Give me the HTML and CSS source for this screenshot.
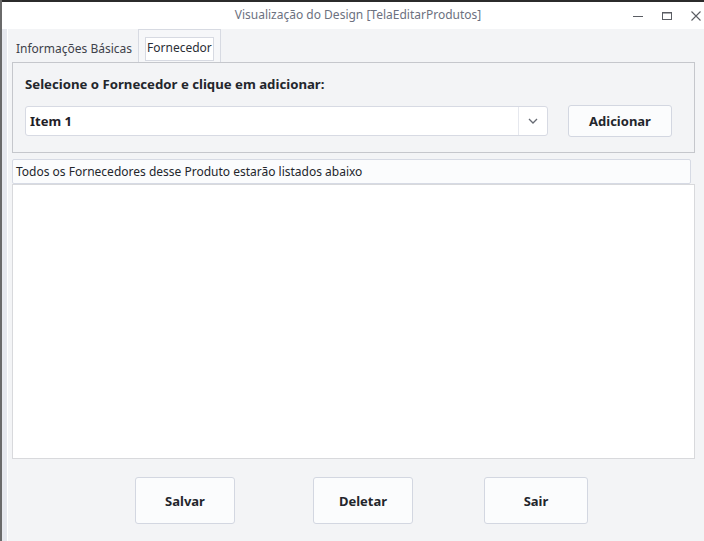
FILE: index.html
```html
<!DOCTYPE html>
<html>
<head>
<meta charset="utf-8">
<link rel="stylesheet" href="styles.css">
</head>
<body>
<div class="desk">
  <div class="window">
    <div class="titlebar">
      <span class="title">Visualização do Design [TelaEditarProdutos]</span>
      <div class="controls">
        <svg class="ctl" width="12" height="12" viewBox="0 0 12 12"><path d="M1 6.5h10" stroke="#5a5d63" stroke-width="1"/></svg>
        <svg class="ctl" width="12" height="12" viewBox="0 0 12 12"><rect x="1.5" y="2.5" width="9" height="7" fill="none" stroke="#5a5d63" stroke-width="1"/><path d="M1.5 3h9" stroke="#5a5d63" stroke-width="1"/></svg>
        <svg class="ctl" width="12" height="12" viewBox="0 0 12 12"><path d="M1.5 1.5l9 9M10.5 1.5l-9 9" stroke="#5a5d63" stroke-width="1.1"/></svg>
      </div>
    </div>
    <div class="body">
      <div class="tabs">
        <div class="tab">Informações Básicas</div>
        <div class="tab active"><span class="focus">Fornecedor</span></div>
      </div>
      <div class="panel">
        <div class="panel-title">Selecione o Fornecedor e clique em adicionar:</div>
        <div class="row">
          <div class="combo">
            <span class="combo-text">Item 1</span>
            <span class="combo-arrow">
              <svg width="12" height="8" viewBox="0 0 12 8"><path d="M2 2l4 4 4-4" fill="none" stroke="#666a73" stroke-width="1.3"/></svg>
            </span>
          </div>
          <button class="btn add">Adicionar</button>
        </div>
      </div>
      <div class="info">Todos os Fornecedores desse Produto estarão listados abaixo</div>
      <div class="list"></div>
      <div class="actions">
        <button class="btn big salvar">Salvar</button>
        <button class="btn big deletar">Deletar</button>
        <button class="btn big sair">Sair</button>
      </div>
    </div>
  </div>
</div>
</body>
</html>
```
FILE: styles.css
```css
html, body {
  margin: 0;
  padding: 0;
}
body {
  width: 704px;
  height: 541px;
  overflow: hidden;
  background: #2b2b2b;
  font-family: "Noto Sans", "Open Sans", sans-serif;
}
.desk {
  padding: 2px 0 0 2px;
  height: 539px;
  background: linear-gradient(to right, #6a6a6a 0, #6a6a6a 2px, transparent 2px);
}
.window {
  height: 539px;
  display: flex;
  flex-direction: column;
  background: #f3f4f6;
}
.titlebar {
  height: 27px;
  background: #ffffff;
  position: relative;
  display: flex;
  align-items: center;
  justify-content: center;
}
.title {
  font-size: 12px;
  color: #6c7180;
  margin-left: 10px;
  margin-bottom: 2px;
}
.controls {
  position: absolute;
  right: 0;
  top: 0;
  height: 27px;
  display: flex;
  align-items: center;
}
.ctl {
  margin-right: 17px;
}
.ctl:last-child {
  margin-right: 2px;
}
.body {
  flex: 1;
  padding: 0 9px 0 10px;
  display: flex;
  flex-direction: column;
  background: linear-gradient(to right, #e6e8ee 0, #e6e8ee 5px, #ffffff 5px, #ffffff 6px, #f3f4f6 6px);
}
.tabs {
  display: flex;
  height: 33px;
  align-items: stretch;
}
.tab {
  font-size: 12px;
  color: #3e424a;
  display: flex;
  align-items: center;
  padding-top: 5px;
}
.tab:first-child {
  padding-left: 4px;
  padding-right: 6px;
}
.tab.active {
  background: #f6f7f9;
  border: 1px solid #d7dae2;
  border-bottom: 0;
  padding: 5px 6px 0 6px;
  color: #2b2e35;
}
.focus {
  border: 1px solid #d7dae2;
  background: #ffffff;
  padding: 2px 1px 4px 1px;
  line-height: 16px;
}
.panel {
  border: 1px solid #c5c7cc;
  background: #f3f4f6;
  height: 89px;
  padding: 0 12px;
}
.panel-title {
  font-size: 13.2px;
  font-weight: bold;
  color: #23262c;
  margin-top: 11px;
  line-height: 20px;
}
.row {
  display: flex;
  align-items: center;
  margin-top: 11px;
}
.combo {
  width: 521px;
  height: 28px;
  background: #ffffff;
  border: 1px solid #d7dae3;
  border-radius: 3px;
  display: flex;
  align-items: center;
}
.combo-text {
  flex: 1;
  font-size: 13px;
  font-weight: bold;
  color: #1e2026;
  padding-left: 4px;
}
.combo-arrow {
  width: 28px;
  height: 28px;
  border-left: 1px solid #e6e8ee;
  display: flex;
  align-items: center;
  justify-content: center;
}
.btn {
  font-family: "Noto Sans", "Open Sans", sans-serif;
  font-size: 13px;
  font-weight: bold;
  color: #23262c;
  background: #fbfcfd;
  border: 1px solid #d3d7e1;
  border-radius: 3px;
  padding: 0;
}
.add {
  width: 104px;
  height: 32px;
  margin-left: 20px;
}
.info {
  margin-top: 6px;
  margin-right: 4px;
  height: 23px;
  border: 1px solid #d6dae4;
  border-radius: 2px;
  background: #fbfcfd;
  font-size: 12px;
  color: #23262c;
  padding-left: 3px;
  line-height: 23px;
}
.list {
  height: 273px;
  background: #ffffff;
  border: 1px solid #d8d9dc;
}
.actions {
  display: flex;
  padding-top: 18px;
}
.big {
  height: 47px;
  line-height: 42px;
}
.salvar {
  width: 100px;
  margin-left: 123px;
}
.deletar {
  width: 100px;
  margin-left: 78px;
}
.sair {
  width: 104px;
  margin-left: 71px;
}
```
